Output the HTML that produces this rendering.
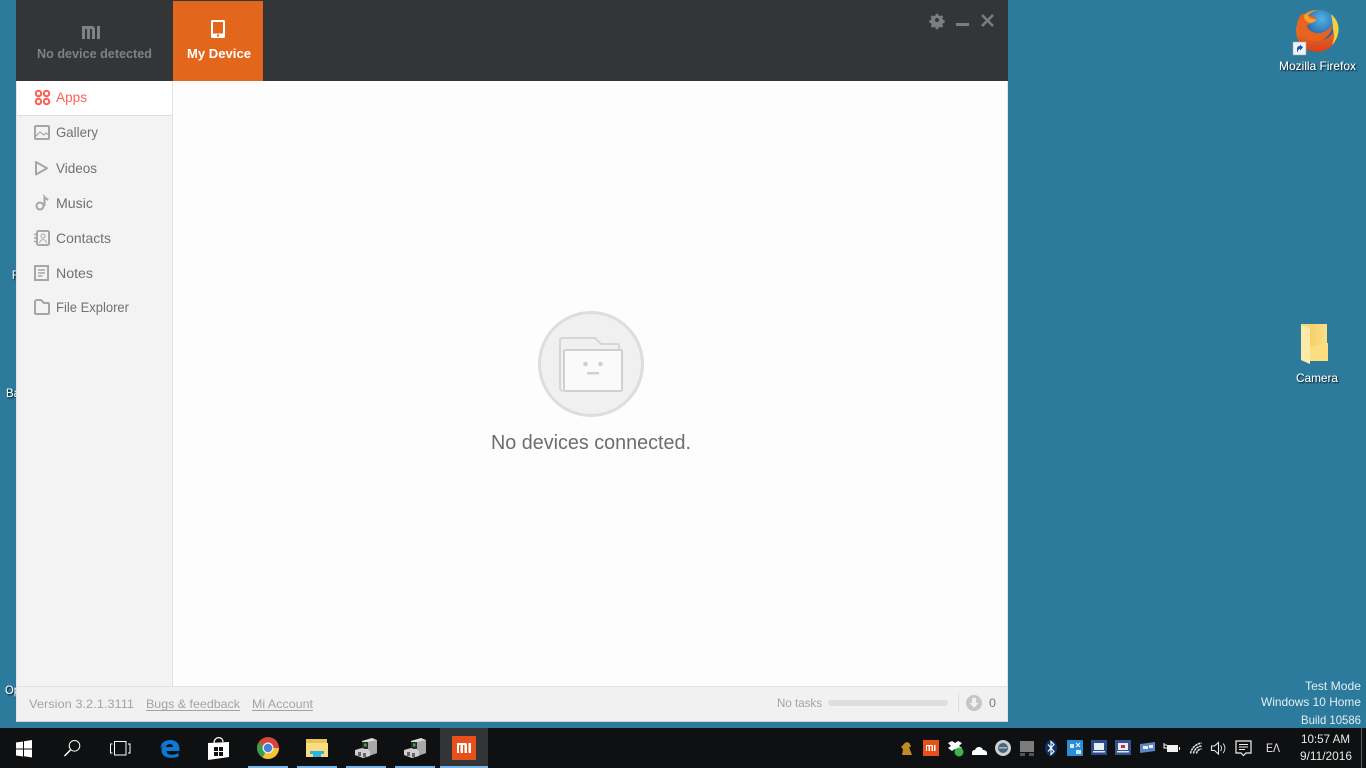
<!DOCTYPE html>
<html>
<head>
<meta charset="utf-8">
<style>
html,body{margin:0;padding:0;width:1366px;height:768px;overflow:hidden;background:#2c7a9c}
svg{display:block;position:absolute;left:0;top:0}
text{font-family:"Liberation Sans",sans-serif}
.s{font-size:14px;fill:#6f7175}
.f{font-size:12px;fill:#a3a3a5}
.d{font-size:12px;fill:#fff;filter:url(#sh)}
.w{font-size:12px;fill:#e4eef3}
.t{font-size:12px;fill:#e8e8e8}
</style>
</head>
<body>
<svg width="1366" height="768" viewBox="0 0 1366 768" xmlns="http://www.w3.org/2000/svg">
<defs>
<filter id="sh" x="-20%" y="-30%" width="140%" height="160%"><feDropShadow dx="1" dy="1" stdDeviation="0.7" flood-color="#000" flood-opacity="0.9"/></filter>
<radialGradient id="gl" cx="0.55" cy="0.3" r="0.75"><stop offset="0" stop-color="#4fb4e4"/><stop offset="1" stop-color="#1d4f9e"/></radialGradient>
<linearGradient id="fx" x1="0" y1="0" x2="0" y2="1"><stop offset="0" stop-color="#f29a28"/><stop offset="1" stop-color="#d8401c"/></linearGradient>
<linearGradient id="fo" x1="0" y1="0" x2="1" y2="0"><stop offset="0" stop-color="#f5d06a"/><stop offset="1" stop-color="#fbdf88"/></linearGradient>
</defs>

<rect width="1366" height="768" fill="#2c7a9c"/>

<!-- desktop slivers on left -->
<text class="d" x="12" y="279" textLength="6" lengthAdjust="spacingAndGlyphs">F</text>
<text class="d" x="6" y="397" textLength="14" lengthAdjust="spacingAndGlyphs">Ba</text>
<text class="d" x="5" y="694" textLength="15" lengthAdjust="spacingAndGlyphs">Op</text>

<!-- Firefox -->
<circle cx="1317" cy="31" r="21" fill="url(#fx)"/>
<circle cx="1320" cy="25" r="15" fill="url(#gl)"/>
<path d="M1297 24c1-5 3-9 6-11l1 4c2-1 5-2 8-1 3 1 4 3 5 4-2 0-4 1-5 3-1 1-3 1-5 2 0 3 3 7 9 8 6 1 12-2 16-8 0 8-6 15-14 16-11 1-21-6-21-17z" fill="#e8641e"/>
<path d="M1331 14c6 5 9 12 7 20-1 4-3 8-6 11 2-6 3-10 1-15 0-5-1-11-2-16z" fill="#f6cf3e"/>
<path d="M1306 14l4 4 7 2-5 3-5-1-3-4z" fill="#f4a52c"/>
<rect x="1293" y="42" width="13" height="13" fill="#f2f4f8" stroke="#9aa8b8" stroke-width="0.6"/>
<path d="M1297 53v-4c0-2 1-3 3-3v-1.500l3 3-3 3V49c-1 0-2 1-3 4z" fill="#1c58a8"/>
<text class="d" x="1279" y="70" textLength="77" lengthAdjust="spacingAndGlyphs">Mozilla Firefox</text>

<!-- Camera folder -->
<path d="M1301 324h26v22h1v15h-18v3l-9-4z" fill="#f8d97c"/>
<path d="M1310 324h17v22h-17z" fill="url(#fo)"/>
<path d="M1310 346h12v-3h6v18h-18z" fill="#fbdc80"/>
<path d="M1301 325l9 3v36l-9-4z" fill="#fde9a8"/>
<text class="d" x="1296" y="382" textLength="42" lengthAdjust="spacingAndGlyphs">Camera</text>

<!-- Watermark -->
<text class="w" x="1305" y="690" textLength="56" lengthAdjust="spacingAndGlyphs">Test Mode</text>
<text class="w" x="1261" y="706" textLength="100" lengthAdjust="spacingAndGlyphs">Windows 10 Home</text>
<text class="w" x="1301" y="724" textLength="60" lengthAdjust="spacingAndGlyphs">Build 10586</text>

<!-- Window -->
<rect x="16" y="0" width="992" height="722" fill="#fdfdfd"/>
<rect x="16" y="0" width="992" height="81" fill="#343537"/>
<rect x="173" y="1" width="90" height="80" fill="#e2661b"/>

<!-- MI logo header -->
<path d="M82 26h10a3 3 0 0 1 3 3v10h-3V29h-2v10h-3V29h-2v10h-3z" fill="#808183"/>
<rect x="97" y="26" width="3" height="13" fill="#808183"/>
<text x="37" y="58" font-size="13" font-weight="bold" fill="#808183" textLength="115" lengthAdjust="spacingAndGlyphs">No device detected</text>

<!-- Phone -->
<rect x="211" y="20" width="14" height="18" rx="1.500" fill="#fff"/>
<rect x="213" y="22" width="10" height="11.500" fill="#e2661b"/>
<rect x="217" y="34.500" width="2" height="2" fill="#e2661b"/>
<text x="187" y="58" font-size="13" font-weight="bold" fill="#fff" textLength="64" lengthAdjust="spacingAndGlyphs">My Device</text>

<!-- window controls -->
<g fill="#7c7d7f">
<path d="M935.800 14h2.400l.5 1.800 1.700.7 1.600-.9 1.700 1.700-.9 1.600.7 1.700 1.800.5v2.400l-1.800.5-.7 1.700.9 1.600-1.700 1.700-1.600-.9-1.700.7-.5 1.800h-2.400l-.5-1.800-1.700-.7-1.600.9-1.700-1.700.9-1.600-.7-1.700-1.800-.5v-2.400l1.800-.5.7-1.700-.9-1.600 1.700-1.700 1.600.9 1.700-.7z" transform="translate(0 -.7) translate(937 20.700) scale(.93) translate(-937 -20.700)"/>
<rect x="956" y="23" width="13" height="3"/>
</g>
<circle cx="937" cy="20" r="2" fill="#343537"/>
<path d="M982 15l11 11M993 15l-11 11" stroke="#7c7d7f" stroke-width="2.600" fill="none"/>

<!-- Sidebar -->
<rect x="16" y="81" width="156" height="605" fill="#f3f3f3"/>
<rect x="172" y="81" width="1" height="605" fill="#e2e2e2"/>
<rect x="16" y="81" width="156" height="34" fill="#fff"/>
<rect x="16" y="115" width="156" height="1" fill="#dedede"/>
<rect x="16" y="81" width="1" height="641" fill="#e4e4e4"/>

<!-- Sidebar icons -->
<g fill="none" stroke="#ff5c4d" stroke-width="2">
<circle cx="38.500" cy="93.500" r="2.700"/><circle cx="46.500" cy="93.500" r="2.700"/><circle cx="38.500" cy="101.500" r="2.700"/><circle cx="46.500" cy="101.500" r="2.700"/>
</g>
<g fill="none" stroke="#a6a6a6" stroke-width="2">
<rect x="35" y="126" width="14" height="13" rx="1"/>
<path d="M36 136l4-4 4 3 2-2 3 2" stroke-width="1.200"/>
<path d="M36 162v12.500l11-6.250z" stroke-linejoin="round"/>
<circle cx="40" cy="206" r="3.500"/>
<path d="M44.500 206v-9c1 1.500 2.500 2 3.500 3" stroke-width="2"/>
<rect x="37" y="231" width="12" height="14" rx="1.500"/>
<path d="M34 234.500h3M34 238h3M34 241.500h3" stroke-width="1.400"/>
<circle cx="43" cy="236" r="2" stroke-width="1"/>
<path d="M39.700 243c0-4.500 6.600-4.500 6.600 0" stroke-width="1"/>
<rect x="35" y="266" width="13" height="14"/>
<path d="M38 270h7M38 273h7M38 276h4.500" stroke-width="1.400"/>
<path d="M35 302a2 2 0 0 1 2-2h4l3 3h4a1 1 0 0 1 1 1v9a1 1 0 0 1-1 1H36a1 1 0 0 1-1-1z" stroke-linejoin="round"/>
</g>

<text class="s" x="56" y="102" style="fill:#ff6050" textLength="31" lengthAdjust="spacingAndGlyphs">Apps</text>
<text class="s" x="56" y="137" textLength="42" lengthAdjust="spacingAndGlyphs">Gallery</text>
<text class="s" x="56" y="173" textLength="41" lengthAdjust="spacingAndGlyphs">Videos</text>
<text class="s" x="56" y="208" textLength="37" lengthAdjust="spacingAndGlyphs">Music</text>
<text class="s" x="56" y="243" textLength="55" lengthAdjust="spacingAndGlyphs">Contacts</text>
<text class="s" x="56" y="278" textLength="37" lengthAdjust="spacingAndGlyphs">Notes</text>
<text class="s" x="56" y="312" textLength="73" lengthAdjust="spacingAndGlyphs">File Explorer</text>

<!-- Empty state -->
<circle cx="591" cy="364" r="51.500" fill="#f0f0f0" stroke="#dddddd" stroke-width="3"/>
<path d="M560 388V340a2 2 0 0 1 2-2h33l6 6h17a1 1 0 0 1 1 1v5" fill="none" stroke="#d6d6d6" stroke-width="2"/>
<path d="M560 388a3 3 0 0 0 3 3" fill="none" stroke="#d6d6d6" stroke-width="2"/>
<rect x="564" y="350" width="58" height="41" rx="1.500" fill="#fafafa" stroke="#d0d0d0" stroke-width="2"/>
<circle cx="585.500" cy="364" r="2.300" fill="#d0d0d0"/>
<circle cx="600.500" cy="364" r="2.300" fill="#d0d0d0"/>
<rect x="587" y="372" width="12" height="2.500" fill="#d0d0d0"/>
<text x="491" y="449" font-size="20" fill="#6c6d71" textLength="200" lengthAdjust="spacingAndGlyphs">No devices connected.</text>

<!-- Footer -->
<rect x="17" y="686" width="990" height="35" fill="#f1f1f1"/>
<rect x="17" y="686" width="990" height="1" fill="#e2e2e2"/>
<rect x="16" y="721" width="992" height="1" fill="#d2d2d2"/>
<rect x="1007" y="81" width="1" height="641" fill="#e4e4e4"/>
<text class="f" x="29" y="708" textLength="105" lengthAdjust="spacingAndGlyphs">Version 3.2.1.3111</text>
<text class="f" x="146" y="708" textLength="94" lengthAdjust="spacingAndGlyphs">Bugs &amp; feedback</text>
<rect x="146" y="710" width="94" height="1" fill="#a3a3a5"/>
<text class="f" x="252" y="708" textLength="61" lengthAdjust="spacingAndGlyphs">Mi Account</text>
<rect x="252" y="710" width="61" height="1" fill="#a3a3a5"/>
<text class="f" x="777" y="707" textLength="45" lengthAdjust="spacingAndGlyphs">No tasks</text>
<rect x="828" y="700" width="120" height="6" rx="3" fill="#dedede"/>
<rect x="958" y="693" width="1" height="20" fill="#dcdcdc"/>
<circle cx="974" cy="703" r="8" fill="#c6c6c6"/>
<path d="M972 698h4v5h2.500l-4.500 5-4.500-5H972z" fill="#f1f1f1"/>
<text x="989" y="707" font-size="12" fill="#75767a" textLength="7" lengthAdjust="spacingAndGlyphs">0</text>

<!-- Taskbar -->
<rect x="0" y="728" width="1366" height="40" fill="#0f1011"/>
<rect x="440" y="728" width="48" height="40" fill="#333435"/>
<g fill="#76b6ea">
<rect x="248" y="766" width="40" height="2"/>
<rect x="297" y="766" width="40" height="2"/>
<rect x="346" y="766" width="40" height="2"/>
<rect x="395" y="766" width="40" height="2"/>
<rect x="440" y="766" width="48" height="2"/>
</g>

<!-- Start -->
<path d="M16 742.500l7-1v7h-7zM24 741.300l8-1.300v8.500h-8zM16 749.500h7v7l-7-1zM24 749.500h8v8l-8-1.200z" fill="#fff"/>
<!-- Search -->
<circle cx="74.500" cy="745.800" r="5.300" fill="none" stroke="#fff" stroke-width="1"/>
<path d="M70.500 750l-6 6" stroke="#fff" stroke-width="1.500"/>
<!-- Task view -->
<rect x="114.500" y="741.500" width="11.500" height="13.500" fill="none" stroke="#fff" stroke-width="1"/>
<path d="M112.500 744h-2v9h2M128 744h2v9h-2" fill="none" stroke="#fff" stroke-width="1"/>
<!-- Edge -->
<path d="M160.500 749c0-6 4-9 10-9 5 0 9 3 9 9.500v1.500h-13c0 4 6 5 12 2v3.500c-8 3-17 1-17-6 0-3 2-5 4-6-2 1-3 2-5 4zM166 747h7c0-4-6-4-7 0z" fill="#0f78d4"/>
<!-- Store -->
<path d="M208 743l21-1v15l-21 3z" fill="#fff"/>
<path d="M214 743c0-7 9-7 9-1" fill="none" stroke="#fff" stroke-width="1.200"/>
<path d="M214 747h4v4h-4zM219 747h4v4h-4zM214 752h4v4h-4zM219 752h4v4h-4z" fill="#0f1011"/>
<!-- Chrome -->
<circle cx="268" cy="748" r="11" fill="#d9443a"/>
<path d="M268 748l-9.500-5.500a11 11 0 0 0 4 15z" fill="#3a9d48"/>
<path d="M268 748h11a11 11 0 0 1-16.500 9.500z" fill="#f4c430"/>
<circle cx="268" cy="748" r="5.500" fill="#e8eef8"/>
<circle cx="268" cy="748" r="4.200" fill="#4a80d8"/>
<!-- Explorer -->
<rect x="306" y="739" width="21" height="18" fill="#e6c45a"/>
<rect x="306" y="743" width="22" height="14" fill="#fbdc7c"/>
<path d="M313 757v-3h-3v-3h14v3h-3v3z" fill="#2cb5e2"/>

<!-- Device manager style icons -->
<path d="M362 741l10-3 5 2v13l-11 4-4-2z" fill="#dcdcdc"/>
<path d="M368 742l9-2v13l-9 3z" fill="#a8a8a8"/>
<rect x="362" y="742" width="6" height="7" fill="#2a2a2a"/>
<rect x="364" y="743.500" width="2.500" height="3" fill="#2fb344"/>
<path d="M355 750l7-2 8 3v5l-7 2-8-3z" fill="#cfcfcf"/>
<path d="M358 752h3v4h-3zM363 753h3v4h-3z" fill="#666"/>

<path d="M411 741l10-3 5 2v13l-11 4-4-2z" fill="#dcdcdc"/>
<path d="M417 742l9-2v13l-9 3z" fill="#a8a8a8"/>
<rect x="411" y="742" width="6" height="7" fill="#2a2a2a"/>
<rect x="413" y="743.500" width="2.500" height="3" fill="#2fb344"/>
<path d="M404 750l7-2 8 3v5l-7 2-8-3z" fill="#cfcfcf"/>
<path d="M407 752h3v4h-3zM412 753h3v4h-3z" fill="#666"/>

<!-- Mi app icon -->
<rect x="452" y="736" width="24" height="24" fill="#e5501b"/>
<path d="M457 743h8a2 2 0 0 1 2 2v8h-2.500v-8h-1.500v8h-2.500v-8h-1.500v8H457zM468.500 743h2.500v10h-2.500z" fill="#fff"/>

<!-- Tray -->
<path d="M904 744a3.500 3.500 0 0 1 6 0l1 3h-2l3 8h-10l1-6-2-2z" fill="#c08a2a"/>
<rect x="923" y="740" width="16" height="16" fill="#e5501b"/>
<path d="M926 745h6a1 1 0 0 1 1 1v5h-1.500v-5H930v5h-1.500v-5H927v5h-1zM934 745h1.500v6H934z" fill="#fff"/>
<path d="M948 743l4-2 3 2 3-2 4 2-3 3 3 2-4 3-3-2-3 2-4-3 3-2z" fill="#fff"/>
<circle cx="959" cy="752" r="4.500" fill="#3fb34f"/>
<path d="M972 753c0-2 1-3 3-3 1-4 7-4 8 0 2 0 4 1 4 3v2h-15z" fill="#fff"/>
<circle cx="1003" cy="748" r="8" fill="#c8d0d6"/>
<circle cx="1003" cy="748" r="5" fill="#4a6478"/>
<rect x="999" y="747" width="8" height="1.500" fill="#a8b8c4"/>
<rect x="1020" y="741" width="14" height="11" fill="#7c7c7c"/>
<rect x="1020" y="753" width="5" height="3" fill="#555"/><rect x="1029" y="753" width="5" height="3" fill="#555"/>
<ellipse cx="1051" cy="748" rx="6" ry="8" fill="#0b3566"/>
<path d="M1048 744.500l6 7-3 3v-13l3 3-6 7" fill="none" stroke="#fff" stroke-width="1.100"/>
<rect x="1067" y="740" width="16" height="16" rx="1" fill="#2a8ed4"/>
<path d="M1070 744h4v4h-4zM1076 750h5v4h-5z" fill="#cfe8f8"/>
<path d="M1076 743l4 4M1080 743l-4 4" stroke="#fff"/>
<rect x="1091" y="740" width="16" height="15" fill="#2f4a8c"/>
<rect x="1094" y="743" width="10" height="7" fill="#e6eef8"/>
<rect x="1093" y="751" width="12" height="1.500" fill="#dfe6f0"/>
<rect x="1115" y="740" width="16" height="15" fill="#39538f"/>
<rect x="1118" y="743" width="10" height="7" fill="#e6eef8"/>
<rect x="1121" y="745" width="4" height="3" fill="#c8322c"/>
<rect x="1117" y="751" width="12" height="1.500" fill="#dfe6f0"/>
<path d="M1140 744l15-2v9l-15 2z" fill="#5b86c4"/>
<path d="M1143 746h5v3h-5zM1149 745h4v3h-4z" fill="#e8f0f8"/>
<rect x="1167" y="745" width="11" height="7" fill="#f2f2f2"/>
<rect x="1179" y="747" width="1" height="3" fill="#f2f2f2"/>
<path d="M1164 743v5h3M1167 745h-3" fill="none" stroke="#fff" stroke-width="1"/>
<path d="M1190.500 753.500a13 13 0 0 1 11-10.500M1193.500 753.500a9 9 0 0 1 8-7.500M1196.500 753.500a5 5 0 0 1 5-4.500" fill="none" stroke="#e4e4e4" stroke-width="1.500" stroke-dasharray="2.500 .6"/>
<path d="M1211.500 746h3l4-3.500v11.500l-4-3.500h-3z" fill="none" stroke="#e8e8e8" stroke-width="1.100"/>
<path d="M1220.500 745.500a4 4 0 0 1 0 5.500M1223 743.500a7 7 0 0 1 0 9.500" fill="none" stroke="#d0d0d0"/>
<path d="M1236 741h15v12h-5l-2.500 2.500-2.500-2.500h-5z" fill="none" stroke="#f0f0f0" stroke-width="1.200"/>
<path d="M1239 744.500h9M1239 747h9M1239 749.500h6" stroke="#f0f0f0"/>
<text class="t" x="1266" y="752" textLength="14" lengthAdjust="spacingAndGlyphs">EΛ</text>
<text class="t" x="1301" y="743" textLength="49" lengthAdjust="spacingAndGlyphs">10:57 AM</text>
<text class="t" x="1300" y="760" textLength="52" lengthAdjust="spacingAndGlyphs">9/11/2016</text>
<rect x="1361" y="728" width="1" height="40" fill="#5a5a5a"/>
</svg>
</body>
</html>
